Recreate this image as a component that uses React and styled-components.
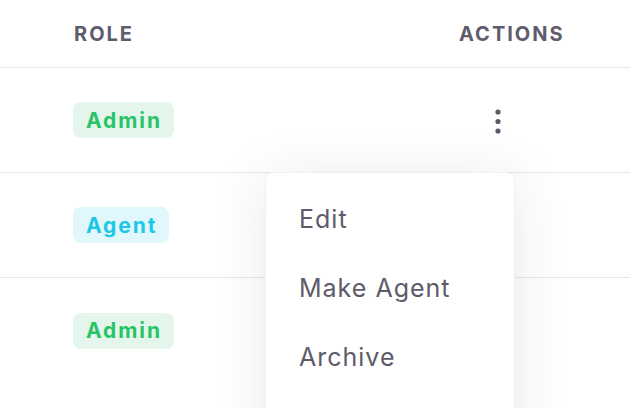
import React from "react";
import styled, { createGlobalStyle } from "styled-components";

const Global = createGlobalStyle`
  html, body { margin: 0; padding: 0; background: #ffffff; }
  body { font-family: "Inter", "Noto Sans", sans-serif; overflow: hidden; }
`;

const Page = styled.div`
  position: relative;
  width: 630px;
  height: 408px;
  overflow: hidden;
  background: #fff;
`;

const Table = styled.div`
  display: grid;
  grid-template-columns: 1fr 190px;
`;

const HeadCell = styled.div`
  height: 68px;
  box-sizing: border-box;
  display: flex;
  align-items: center;
  padding-left: ${(p) => p.$pad}px;
  border-bottom: 1px solid #e6e5ec;
  font-size: 20px;
  font-weight: 650;
  letter-spacing: 2px;
  color: #5f5c6c;
  text-transform: uppercase;
`;

const Cell = styled.div`
  height: 105px;
  box-sizing: border-box;
  display: flex;
  align-items: center;
  padding-left: ${(p) => p.$pad}px;
  border-bottom: ${(p) => (p.$last ? "none" : "1px solid #e6e5ec")};
`;

const Badge = styled.span`
  display: inline-flex;
  align-items: center;
  height: 36px;
  padding: 0 12px 0 13px;
  border-radius: 8px;
  font-size: 21px;
  font-weight: 650;
  letter-spacing: 1.9px;
  background: ${(p) => (p.$tone === "agent" ? "#e0f7fc" : "#e4f6eb")};
  color: ${(p) => (p.$tone === "agent" ? "#1bc8e6" : "#28c467")};
`;

const KebabButton = styled.button`
  margin-left: 28px;
  width: 22px;
  height: 30px;
  border: none;
  background: transparent;
  padding: 0;
  display: flex;
  align-items: center;
  justify-content: center;
  cursor: pointer;
  margin-top: 3px;
`;

const Menu = styled.div`
  position: absolute;
  left: 265px;
  top: 172px;
  width: 250px;
  height: 300px;
  background: #fff;
  border-radius: 8px;
  border: 1px solid #f0eff3;
  box-sizing: border-box;
  box-shadow: 0 6px 56px rgba(40, 38, 60, 0.1);
  padding-top: 11px;
  display: flex;
  flex-direction: column;
`;

const MenuItem = styled.div`
  height: 69px;
  display: flex;
  align-items: center;
  padding-left: 33px;
  font-size: 25px;
  font-weight: 400;
  letter-spacing: 1px;
  color: #5e5b6b;
`;

const Kebab = () => (
  <svg width="6" height="26" viewBox="0 0 6 26">
    <circle cx="3" cy="3" r="2.6" fill="#5b5869" />
    <circle cx="3" cy="12.5" r="2.6" fill="#5b5869" />
    <circle cx="3" cy="22" r="2.6" fill="#5b5869" />
  </svg>
);

const rows = [
  { role: "Admin", tone: "admin" },
  { role: "Agent", tone: "agent" },
  { role: "Admin", tone: "admin" },
];

export default function App() {
  return (
    <Page>
      <Global />
      <Table>
        <HeadCell $pad={74}>Role</HeadCell>
        <HeadCell $pad={19}>Actions</HeadCell>
        {rows.map((r, i) => {
          const last = i === rows.length - 1;
          return (
            <React.Fragment key={i}>
              <Cell $pad={73} $last={last}>
                <Badge $tone={r.tone}>{r.role}</Badge>
              </Cell>
              <Cell $pad={19} $last={last}>
                {i === 0 && (
                  <KebabButton aria-label="actions">
                    <Kebab />
                  </KebabButton>
                )}
              </Cell>
            </React.Fragment>
          );
        })}
      </Table>
      <Menu>
        <MenuItem>Edit</MenuItem>
        <MenuItem>Make Agent</MenuItem>
        <MenuItem>Archive</MenuItem>
      </Menu>
    </Page>
  );
}
